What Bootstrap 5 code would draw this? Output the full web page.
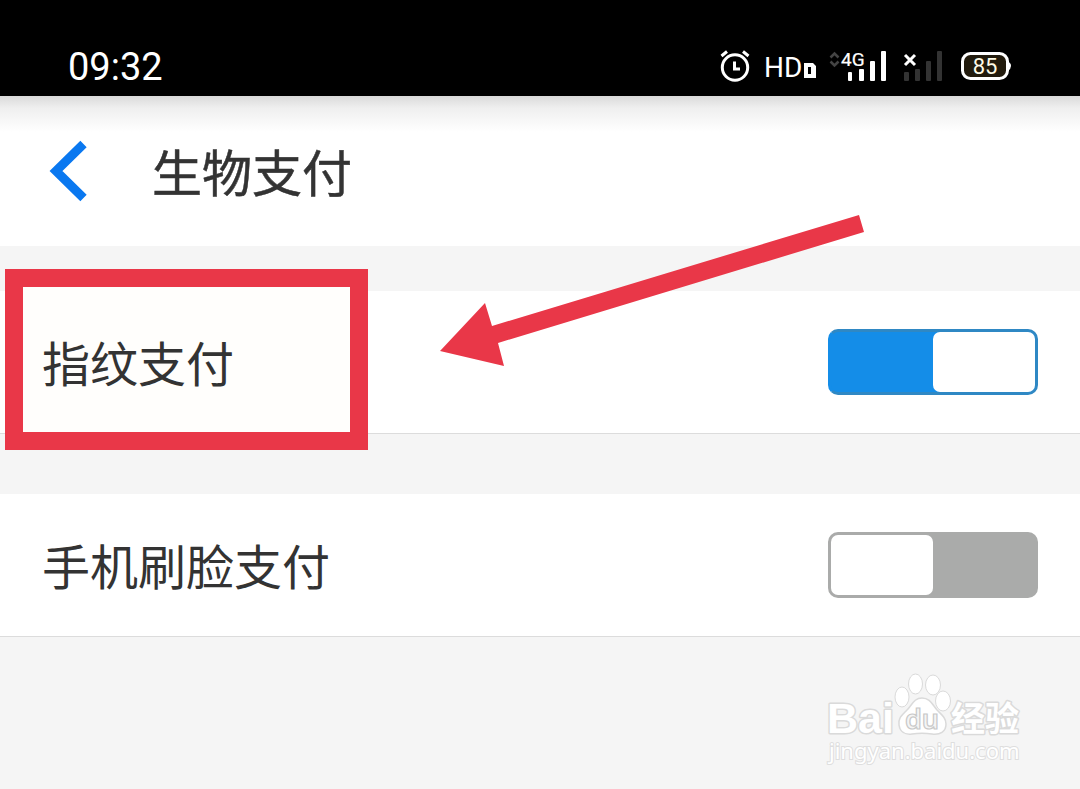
<!DOCTYPE html>
<html lang="zh-CN">
<head>
<meta charset="utf-8">
<meta name="viewport" content="width=device-width, initial-scale=1">
<title>生物支付</title>
<link href="https://cdn.jsdelivr.net/npm/bootstrap@5.3.0/dist/css/bootstrap.min.css" rel="stylesheet">
<style>
  body { background: #f5f5f5; color: #333; font-family: "Liberation Sans", "Noto Sans CJK SC", sans-serif; }
  svg { display: block; overflow: visible; flex-shrink: 0; }
  .status-bar { background: #000; color: #fff; height: 96px; padding: 36px 68px 0; }
  .status-time { font: 38px/60px Roboto, sans-serif; padding-top: 2px; }
  .status-icons { gap: 12px; }
  .title-bar { height: 150px; padding: 0 48px; gap: 64px; background: linear-gradient(#dadada, #efefef 12px, #fff 36px); }
  .page-title { font: 400 50px/60px "Noto Sans CJK SC", sans-serif; -webkit-text-stroke: 0.5px #333; padding-bottom: 2px; }
  .setting { height: 143px; padding: 0 42px; background: #fff; border-bottom: 1px solid #dcdcdc; }
  .setting-label { font: 48px/60px "Noto Sans CJK SC", sans-serif; padding-bottom: 2px; z-index: 1; }
  .setting-list { padding-top: 45px; gap: 60px; }
  .toggle { appearance: none; width: 210px; height: 66px; border: 3px solid #aaabaa; border-radius: 10px; background: #aaabaa; cursor: pointer; }
  .toggle::before { content: ""; display: block; width: 102px; height: 60px; border-radius: 7px; background: #fff; }
  .toggle:checked { background: #148de8; border-color: #2f88c4; border-left-color: #148de8; }
  .toggle:checked::before { margin-left: auto; }
  .highlight { position: absolute; left: 5px; top: -22px; width: 363px; height: 181px; border: 18px solid #e93748; background: #fffefc; }
  .pointer { position: absolute; left: 440px; top: -76px; pointer-events: none; z-index: 1; }
  .site-mark { padding: 33px 50px 0; }
</style>
</head>
<body>
<header>
  <div class="status-bar d-flex justify-content-between align-items-center">
    <div class="status-time">09:32</div>
    <div class="status-icons d-flex align-items-center">
      <svg width="32" height="32" viewBox="720 50 32 32" fill="none" stroke="#fff" stroke-width="3" role="img" aria-label="闹钟">
        <circle cx="735" cy="67.500" r="12.700"/>
        <path d="M721.500 56l5.500-4.500M743 51.500l5.500 4.500M734.500 61.500v7.500h5.500"/>
      </svg>
      <svg width="52" height="32" viewBox="764 50 52 32" fill="#fff" role="img" aria-label="HD">
        <text x="764" y="77" font-family="Roboto" font-size="28">HD</text>
        <path fill-rule="evenodd" d="M804 63h9l3 3v12h-12zM808 67v7h3v-7z"/>
      </svg>
      <svg width="62" height="32" viewBox="828 50 62 32" fill="#fff" role="img" aria-label="4G">
        <path d="M830.500 57.500l4-4 4 4M830.500 61.500l4 4 4-4" fill="none" stroke="#444" stroke-width="2.500"/>
        <text x="841" y="66" font-family="Roboto" font-size="19" stroke="#fff" stroke-width=".2">4G</text>
        <rect x="848" y="72" width="4" height="9" rx="1"/><rect x="859" y="69" width="5" height="12" rx="1"/><rect x="870" y="61" width="5" height="20" rx="1"/><rect x="881" y="51" width="5" height="30" rx="1"/>
      </svg>
      <svg width="46" height="32" viewBox="902 50 46 32" fill="#333" role="img" aria-label="无信号">
        <path d="M905 55l10 10m0-10l-10 10" stroke="#fff" stroke-width="3"/>
        <rect x="904" y="72" width="5" height="9" rx="1"/><rect x="915" y="69" width="5" height="12" rx="1"/><rect x="926" y="61" width="5" height="20" rx="1"/><rect x="937" y="51" width="5" height="30" rx="1"/>
      </svg>
      <svg width="52" height="32" viewBox="960 50 52 32" role="img" aria-label="电量 85%">
        <rect x="962.500" y="53.500" width="45" height="25" rx="8" fill="#221b0d" stroke="#fff" stroke-width="3"/>
        <path d="M1008 61q6 5 0 10z" fill="#fff"/>
        <text x="985" y="74" text-anchor="middle" font-family="Roboto" font-size="22" fill="#fffbe8">85</text>
      </svg>
    </div>
  </div>
  <div class="title-bar d-flex align-items-center">
    <button class="btn p-0 border-0" type="button" aria-label="返回">
      <svg width="40" height="60" viewBox="0 0 40 60" fill="none" stroke="#0a78f0" stroke-width="9"><path d="M35.500 3L8 30l27.500 27"/></svg>
    </button>
    <h1 class="page-title m-0">生物支付</h1>
  </div>
</header>
<main>
  <div class="setting-list d-flex flex-column">
    <div class="setting position-relative d-flex align-items-center justify-content-between">
      <div class="highlight"></div>
      <label class="setting-label position-relative" for="fingerprint">指纹支付</label>
      <input class="toggle" type="checkbox" role="switch" id="fingerprint" checked>
      <svg class="pointer" width="425" height="152" viewBox="0 0 425 152" fill="#e93748" aria-hidden="true"><path d="M0 136L45 88l7 23L419 0l5 17L58 128l6 23z"/></svg>
    </div>
    <div class="setting d-flex align-items-center justify-content-between">
      <label class="setting-label" for="face">手机刷脸支付</label>
      <input class="toggle" type="checkbox" role="switch" id="face">
    </div>
  </div>
</main>
<footer class="site-mark d-flex justify-content-end">
  <svg width="210" height="100" viewBox="820 670 210 100" fill="#fff" stroke="#dadada" stroke-width="1" role="img" aria-label="百度经验">
    <g stroke-width="3" stroke-linejoin="round" paint-order="stroke">
      <text x="827" y="733" font-family="Liberation Sans" font-weight="700" font-size="43">Bai</text>
      <text x="951" y="731" font-family="Liberation Sans, Noto Sans CJK SC" font-weight="700" font-size="34">经验</text>
    </g>
    <ellipse cx="902" cy="697" rx="7" ry="10"/><ellipse cx="915.500" cy="684" rx="7" ry="10"/><ellipse cx="933" cy="685" rx="7.500" ry="10"/><ellipse cx="943" cy="701" rx="7.500" ry="10"/>
    <path stroke-width="1.500" d="M922 698c-8 0-10 7-15 12-5 5-9 8-8 15 1 7 6 10 13 9 7-1 13-1 20 0 8 1 14-2 14-10 0-6-4-9-9-14-5-6-7-12-15-12z"/>
    <text x="922" y="729" text-anchor="middle" font-family="Noto Sans" font-weight="600" font-size="27" fill="#f5f5f5" stroke="#c8c8c8" stroke-width="1.200">du</text>
    <text x="829" y="759" font-family="Noto Sans" font-size="22" stroke="#dedede" stroke-width="2" paint-order="stroke">jingyan.baidu.com</text>
  </svg>
</footer>
<script src="https://cdn.jsdelivr.net/npm/bootstrap@5.3.0/dist/js/bootstrap.bundle.min.js"></script>
</body>
</html>
